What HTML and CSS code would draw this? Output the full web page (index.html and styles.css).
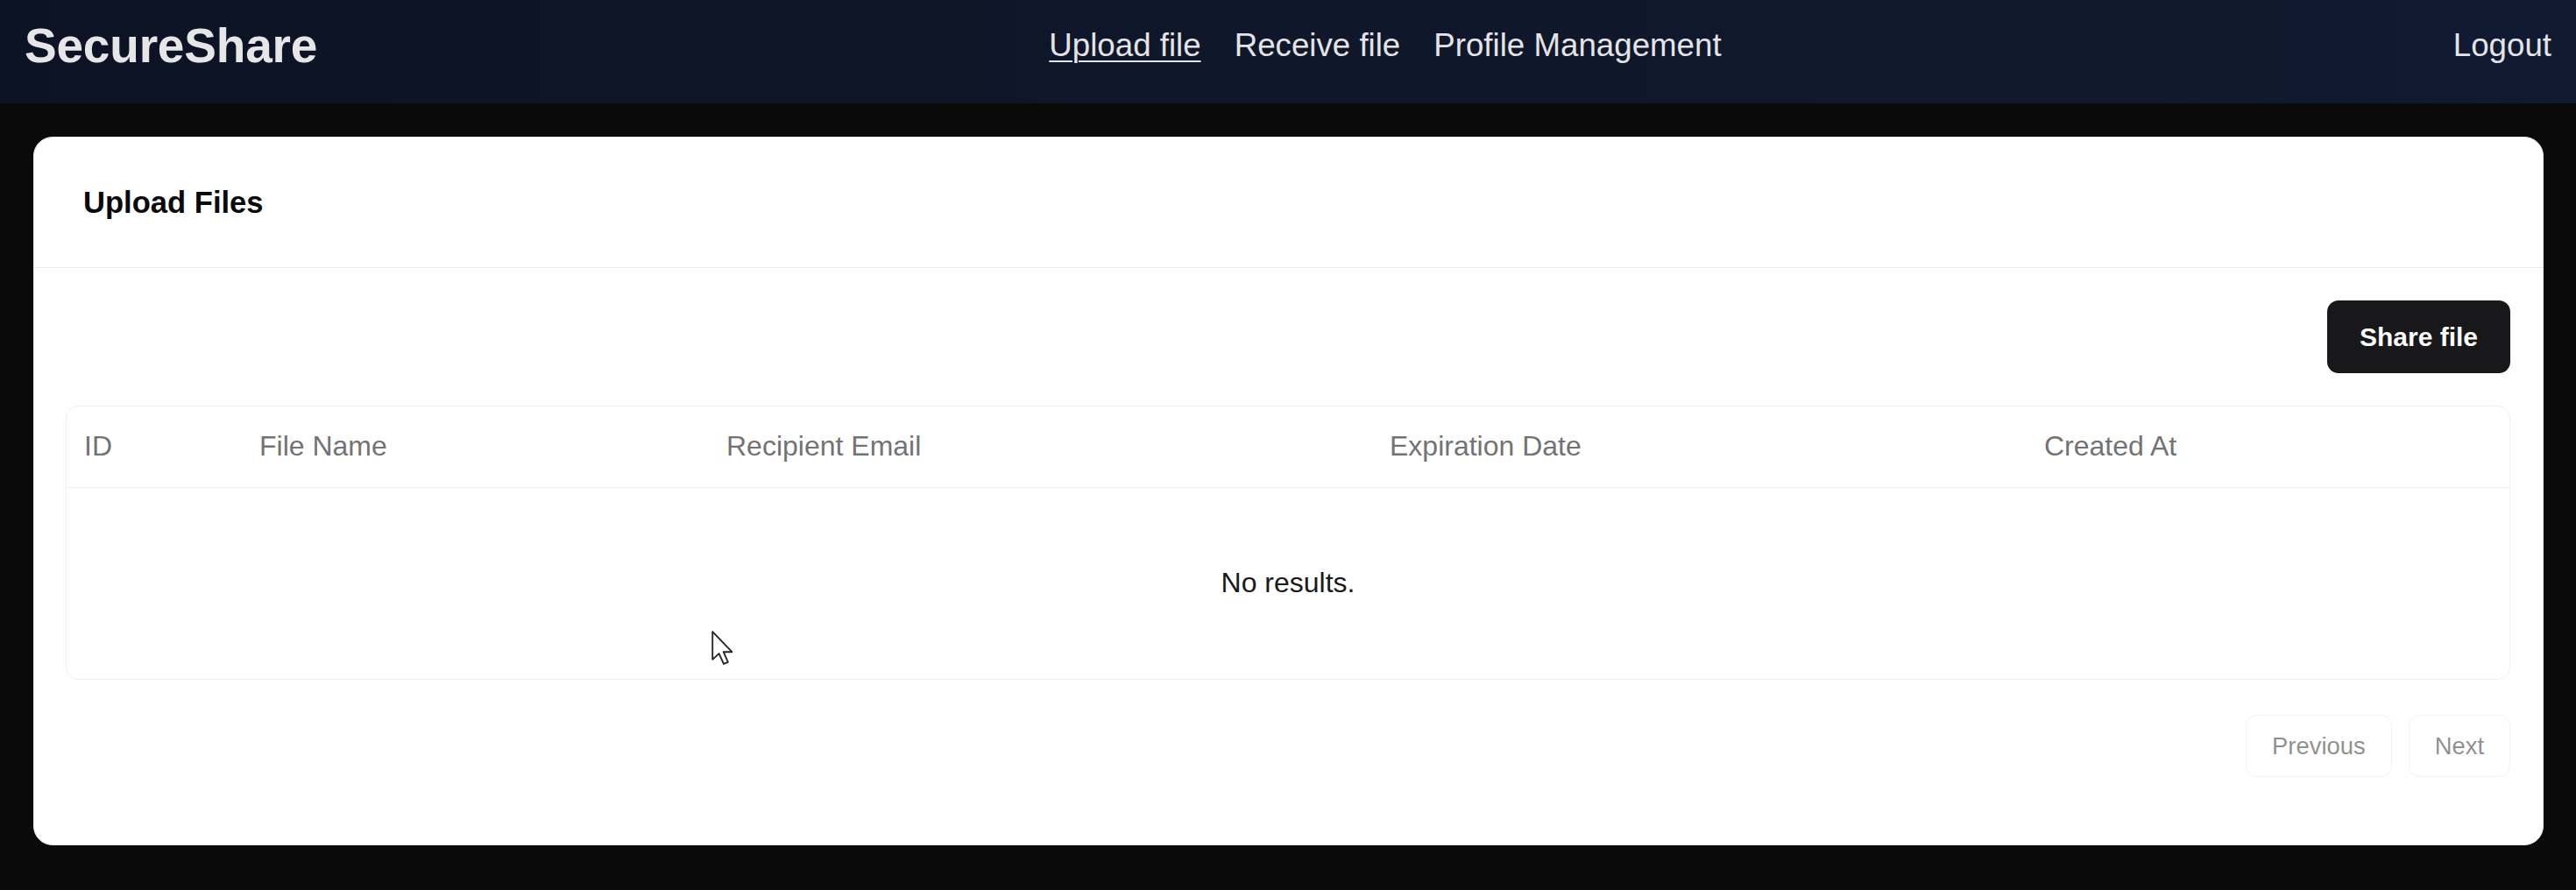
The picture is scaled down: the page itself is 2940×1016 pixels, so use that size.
FILE: index.html
```html
<!DOCTYPE html>
<html lang="en">
<head>
<meta charset="utf-8">
<title>SecureShare</title>
<link rel="stylesheet" href="styles.css">
</head>
<body>
<header class="topbar">
  <div class="logo">SecureShare</div>
  <nav class="nav">
    <a class="nav-link active" href="#">Upload file</a>
    <a class="nav-link" href="#">Receive file</a>
    <a class="nav-link" href="#">Profile Management</a>
  </nav>
  <a class="logout" href="#">Logout</a>
</header>
<main class="page">
  <section class="card">
    <div class="card-header">
      <h2 class="card-title">Upload Files</h2>
    </div>
    <div class="card-body">
      <div class="toolbar">
        <button class="btn-primary" type="button">Share file</button>
      </div>
      <div class="table-box">
        <table class="data-table">
          <thead>
            <tr>
              <th class="col-id">ID</th>
              <th class="col-name">File Name</th>
              <th class="col-email">Recipient Email</th>
              <th class="col-exp">Expiration Date</th>
              <th class="col-created">Created At</th>
            </tr>
          </thead>
          <tbody>
            <tr>
              <td class="empty" colspan="5">No results.</td>
            </tr>
          </tbody>
        </table>
      </div>
      <div class="pager">
        <button class="btn-outline" type="button" disabled>Previous</button>
        <button class="btn-outline" type="button" disabled>Next</button>
      </div>
    </div>
  </section>
</main>
<svg class="cursor" viewBox="0 0 13 20" width="27" height="41" aria-hidden="true">
  <path d="M1 1 L1 16.5 L4.6 13.2 L7.2 19 L9.6 18 L7.1 12.3 L11.8 12.3 Z" fill="#ffffff" stroke="#222222" stroke-width="0.9" stroke-linejoin="round"/>
</svg>
</body>
</html>
```

FILE: styles.css
```css
* {
  box-sizing: border-box;
}

html, body {
  margin: 0;
  padding: 0;
}

body {
  background: #0a0a0a;
  font-family: "Liberation Sans", Arial, Helvetica, sans-serif;
  color: #0a0a0a;
  min-height: 1016px;
  position: relative;
  overflow: hidden;
}

.topbar {
  height: 118px;
  background: linear-gradient(90deg, #0c1324 0%, #0f172a 50%, #101a30 100%);
  display: flex;
  align-items: center;
  justify-content: space-between;
  padding: 0 28px 14px 28px;
}

.logo {
  font-size: 55px;
  font-weight: 700;
  color: #e6e6e6;
  line-height: 62px;
  letter-spacing: -0.2px;
}

.nav {
  display: flex;
  align-items: center;
  gap: 38px;
}

.nav-link,
.logout {
  font-size: 36.7px;
  line-height: 42px;
  color: #e4e4e6;
  text-decoration: none;
}

.nav-link.active {
  text-decoration: underline;
  text-underline-offset: 5px;
  text-decoration-thickness: 2px;
}

.page {
  padding: 38px 37px 0 38px;
}

.card {
  background: #ffffff;
  border-radius: 22px;
  border: 1px solid #e8e8e8;
  overflow: hidden;
}

.card-header {
  padding: 55px 56px;
  border-bottom: 1px solid #ebebeb;
}

.card-title {
  margin: 0;
  font-size: 34.6px;
  line-height: 38px;
  font-weight: 700;
  color: #0a0a0a;
}

.card-body {
  padding: 37px 37px 37px 36px;
}

.toolbar {
  display: flex;
  justify-content: flex-end;
}

.btn-primary {
  height: 83px;
  padding: 0 37px;
  background: #18181b;
  color: #fafafa;
  border: none;
  border-radius: 13px;
  font-family: inherit;
  font-size: 30px;
  font-weight: 700;
}

.table-box {
  margin-top: 37px;
  border: 1px solid #f0f0f0;
  border-radius: 14px;
  overflow: hidden;
}

.data-table {
  width: 100%;
  border-collapse: collapse;
  table-layout: fixed;
}

.data-table th {
  height: 92px;
  padding: 0 20px;
  text-align: left;
  font-size: 32px;
  font-weight: 400;
  color: #737373;
  border-bottom: 1px solid #efefef;
}

.col-id { width: 200px; }
.col-name { width: 533px; }
.col-email { width: 757px; }
.col-exp { width: 747px; }
.col-created { width: auto; }

.data-table .empty {
  height: 219px;
  text-align: center;
  font-size: 32px;
  color: #1a1a1a;
}

.pager {
  display: flex;
  justify-content: flex-end;
  gap: 19px;
  margin-top: 40px;
  margin-bottom: 40px;
}

.btn-outline {
  height: 71px;
  padding: 0 29px;
  background: #ffffff;
  border: 1px solid #e5e5e5;
  border-radius: 12px;
  font-family: inherit;
  font-size: 27.4px;
  color: #0a0a0a;
  opacity: 0.45;
}

.cursor {
  position: absolute;
  left: 811px;
  top: 719px;
}
```
